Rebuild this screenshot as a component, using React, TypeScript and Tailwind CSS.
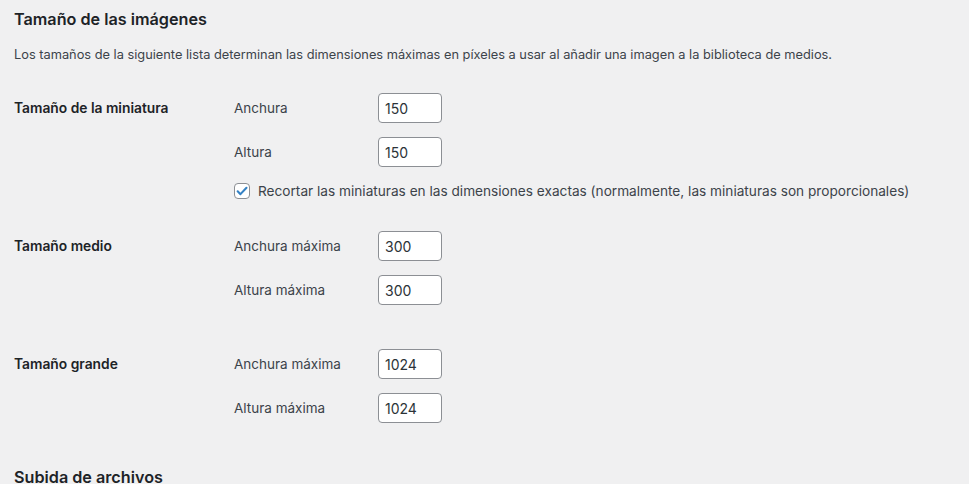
import React from "react";

const font = { fontFamily: "Inter, 'Noto Sans', sans-serif" };

function NumInput({ value }: { value: string }) {
  return (
    <input
      type="text"
      defaultValue={value}
      className="h-[30px] w-[64px] rounded-[4px] border border-[#8c8f94] bg-white px-[6px] text-[14px] text-[#2c3338] outline-none"
    />
  );
}

function Field({ label, value, className = "" }: { label: string; value: string; className?: string }) {
  return (
    <div className={"flex h-[30px] items-center " + className}>
      <label className="w-[144px] text-[13.5px] text-[#3c434a]">{label}</label>
      <NumInput value={value} />
    </div>
  );
}

function Section({ title, children, className = "" }: { title: string; children: React.ReactNode; className?: string }) {
  return (
    <div className={"flex " + className}>
      <div className="flex h-[30px] w-[220px] shrink-0 items-center text-[13.8px] font-semibold text-[#1d2327]">{title}</div>
      <div className="flex flex-col">{children}</div>
    </div>
  );
}

export default function App() {
  return (
    <div style={font} className="min-h-[484px] w-full overflow-hidden bg-[#f0f0f1] pl-[14px]">
      <h2 className="pt-[7px] text-[16.2px] leading-[24px] font-semibold text-[#1d2327]">Tamaño de las imágenes</h2>
      <p className="mt-[14px] text-[12.8px] leading-[20px] text-[#3c434a]">
        Los tamaños de la siguiente lista determinan las dimensiones máximas en píxeles a usar al añadir una imagen a la biblioteca de medios.
      </p>

      <Section title="Tamaño de la miniatura" className="mt-[28px]">
        <Field label="Anchura" value="150" />
        <Field label="Altura" value="150" className="mt-[14px]" />
        <label className="mt-[14px] flex h-[20px] items-center gap-[8px] text-[13.65px] text-[#3c434a]">
          <span className="flex h-[16px] w-[16px] items-center justify-center rounded-[4px] border border-[#8c8f94] bg-white">
            <svg viewBox="0 0 20 20" className="h-[14px] w-[14px]">
              <path d="M3.8 10.4l4 4.1L16.4 5.4" fill="none" stroke="#3582c4" strokeWidth="3" strokeLinecap="round" strokeLinejoin="round" />
            </svg>
          </span>
          Recortar las miniaturas en las dimensiones exactas (normalmente, las miniaturas son proporcionales)
        </label>
      </Section>

      <Section title="Tamaño medio" className="mt-[30px]">
        <Field label="Anchura máxima" value="300" />
        <Field label="Altura máxima" value="300" className="mt-[14px]" />
      </Section>

      <Section title="Tamaño grande" className="mt-[44px]">
        <Field label="Anchura máxima" value="1024" />
        <Field label="Altura máxima" value="1024" className="mt-[14px]" />
      </Section>

      <h2 className="mt-[42px] text-[16.2px] leading-[24px] font-semibold text-[#1d2327]">Subida de archivos</h2>
    </div>
  );
}
